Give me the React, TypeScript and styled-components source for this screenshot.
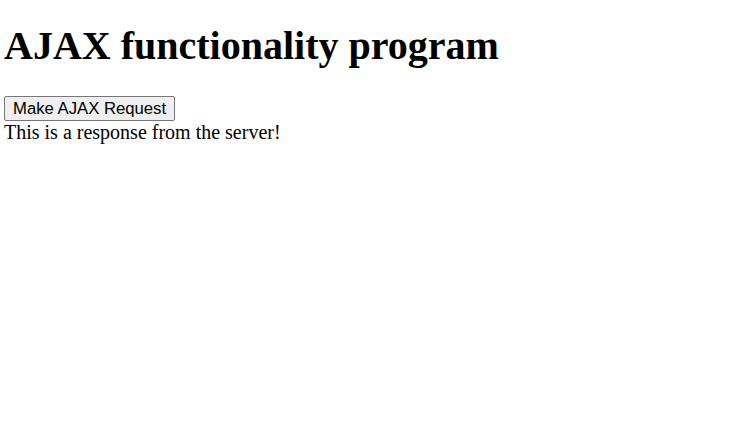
import React from "react";
import styled, { createGlobalStyle } from "styled-components";

const Global = createGlobalStyle`
  body { margin: 4px; background: #fff; font-family: "Liberation Serif", "Times New Roman", serif; font-size: 20px; color: #000; }
`;

const Title = styled.h1`
  font-family: "Liberation Serif", "Times New Roman", serif;
  font-size: 40px;
  font-weight: bold;
  margin: 19px 0 27px;
  line-height: 46px;
`;

const Controls = styled.div`
  display: flex;
`;

const Button = styled.button`
  font-family: "Liberation Sans", Arial, sans-serif;
  font-size: 16.7px;
  background: #efefef;
  border: 1px solid #767676;
  border-radius: 2px;
  padding: 0 8px;
  color: #000;
  height: 25px;
  line-height: 23px;
`;

const Response = styled.div`
  font-size: 20px;
  line-height: 23px;
`;

export default function App() {
  return (
    <>
      <Global />
      <Title>AJAX functionality program</Title>
      <Controls>
        <Button>Make AJAX Request</Button>
      </Controls>
      <Response>This is a response from the server!</Response>
    </>
  );
}
